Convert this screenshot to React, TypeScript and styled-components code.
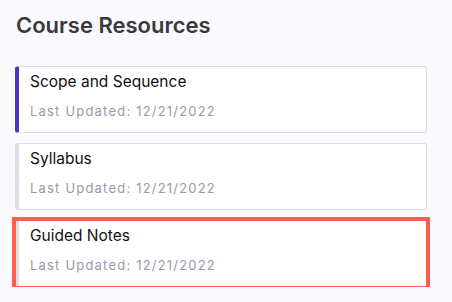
import React from "react";
import styled, { createGlobalStyle } from "styled-components";

const resources = [
  { id: 1, title: "Scope and Sequence", updated: "12/21/2022", active: true, selected: false },
  { id: 2, title: "Syllabus", updated: "12/21/2022", active: false, selected: false },
  { id: 3, title: "Guided Notes", updated: "12/21/2022", active: false, selected: true },
];

function App() {
  return (
    <>
      <GlobalStyle />
      <Page>
        <Heading>Course Resources</Heading>
        <ResourceList>
          {resources.map((item) => (
            <ResourceCard key={item.id} $active={item.active} $selected={item.selected}>
              <ResourceTitle>{item.title}</ResourceTitle>
              <ResourceMeta>Last Updated: {item.updated}</ResourceMeta>
            </ResourceCard>
          ))}
        </ResourceList>
      </Page>
    </>
  );
}

const GlobalStyle = createGlobalStyle`
  body {
    margin: 0;
    background: #f9f9fe;
    font-family: Inter, "Noto Sans", sans-serif;
  }
`;

const Page = styled.div`
  width: 412px;
  padding: 12px 25px 0 15px;
`;

const Heading = styled.h2`
  margin: 0 0 27px 1px;
  font-size: 22px;
  line-height: 27px;
  font-weight: 600;
  color: #3a3a3c;
`;

const ResourceList = styled.ul`
  display: flex;
  flex-direction: column;
  gap: 10px;
  list-style: none;
  padding: 0;
  margin: 0;
`;

const ResourceCard = styled.li<{ $active: boolean; $selected: boolean }>`
  display: flex;
  flex-direction: column;
  gap: 12px;
  height: 67px;
  box-sizing: border-box;
  padding: 6px 12px 0 11px;
  background: #ffffff;
  border: 1px solid #dcdce4;
  border-left: 4px solid ${(p) => (p.$active ? "#4c32c9" : "#dcdce4")};
  border-radius: ${(p) => (p.$selected ? "0" : "3px")};
  outline: ${(p) => (p.$selected ? "4px solid #ff5d50" : "none")};
  outline-offset: -1px;
`;

const ResourceTitle = styled.span`
  font-size: 15.5px;
  line-height: 18px;
  font-weight: 400;
  color: #111111;
`;

const ResourceMeta = styled.span`
  font-size: 13px;
  line-height: 16px;
  letter-spacing: 1.2px;
  color: #9a98ae;
`;

export default App;
